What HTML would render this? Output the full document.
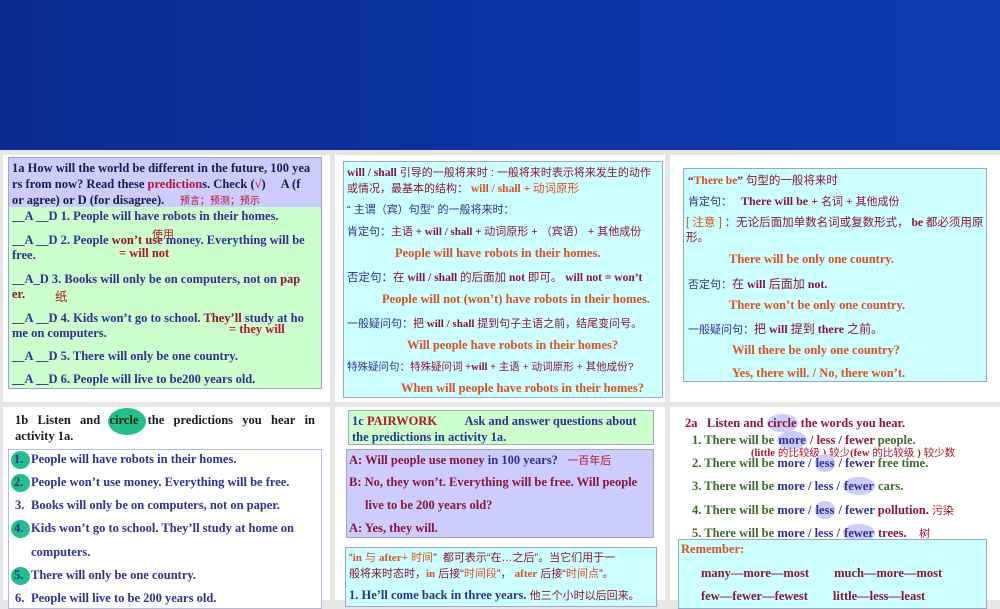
<!DOCTYPE html>
<html><head><meta charset="utf-8"><style>
*{margin:0;padding:0;box-sizing:border-box}
body{width:1000px;height:600px;overflow:hidden;background:#e6e6e6;position:relative;font-family:"Liberation Serif","Noto Serif CJK SC","Noto Sans CJK SC",serif;font-weight:bold;font-size:12.5px}
.ab{position:absolute;white-space:nowrap}
.p{position:absolute;background:#fff}
.b{color:#2e3192}.r{color:#b5142b}.o{color:#e0501e}.dr{color:#8b1538}.g{color:#3a6b2a}.cn{font-family:"Liberation Sans","Noto Sans CJK SC",sans-serif;font-weight:normal}
.box{position:absolute;border:1px solid #9aa6c8}
.el{background:#ccccff;border-radius:50%;padding:2px 1px}
.dot{position:absolute;left:11px;width:19px;height:18px;border-radius:50%;background:#20c08a}
</style></head><body>
<div style="position:absolute;left:0;top:0;width:1000px;height:150px;background:linear-gradient(90deg,#0a2a8e,#0c35a8 60%,#0d3aae)"></div>
<div class="p" style="left:3px;top:155px;width:327px;height:247px"></div>
<div class="p" style="left:335px;top:155px;width:330px;height:247px"></div>
<div class="p" style="left:670px;top:155px;width:330px;height:247px"></div>
<div class="p" style="left:3px;top:407px;width:327px;height:193px"></div>
<div class="p" style="left:335px;top:407px;width:330px;height:193px"></div>
<div class="p" style="left:670px;top:407px;width:330px;height:193px"></div>

<!-- 1a -->
<div class="box" style="left:8px;top:157px;width:314px;height:232px;background:#ccffcc"></div>
<div style="position:absolute;left:9px;top:158px;width:312px;height:49px;background:#ccccff"></div>
<div class="ab" style="left:12px;top:160px;line-height:16px;color:#1a1a4a">1a How will the world be different in the future, 100 yea<br>rs from now? Read these <span class="r">prediction</span>s. Check (<span class="r">√</span>) &nbsp;&nbsp;&nbsp; A (f<br>or agree) or D (for disagree). &nbsp;&nbsp;&nbsp; <span class="r cn" style="font-size:10px">预言；预测；预示</span></div>
<div class="ab b" style="left:12px;top:209px">__A __D 1. People will have robots in their homes.</div>
<div class="ab r cn" style="left:152px;top:226px;font-size:11px">使用</div>
<div class="ab b" style="left:12px;top:233px">__A __D 2. People <span class="dr">won’t use</span> money. Everything will be</div>
<div class="ab b" style="left:12px;top:248px">free.</div><div class="ab r" style="left:119px;top:246px">= will not</div>
<div class="ab b" style="left:12px;top:272px">__A_D 3. Books will only be on computers, not on <span class="dr">pap</span></div>
<div class="ab dr" style="left:12px;top:287px">er.</div><div class="ab r cn" style="left:55px;top:286px">纸</div>
<div class="ab b" style="left:12px;top:311px">__A __D 4. Kids won’t go to school. <span class="dr">They’ll</span> study at ho</div>
<div class="ab b" style="left:12px;top:326px">me on computers.</div><div class="ab r" style="left:229px;top:322px">= they will</div>
<div class="ab b" style="left:12px;top:349px">__A __D 5. There will only be one country.</div>
<div class="ab b" style="left:12px;top:372px">__A __D 6. People will live to be200 years old.</div>

<!-- will/shall -->
<div class="box" style="left:343px;top:161px;width:320px;height:237px;background:#ccffff"></div>
<div class="ab dr" style="left:347px;top:165px;line-height:16px;font-size:11.5px">will / shall <span class="cn" style="font-size:11px">引导的一般将来时 : 一般将来时表示将来发生的动作</span><br><span class="cn" style="font-size:11px">或情况，最基本的结构：</span> <span class="o">will / shall + <span class="cn">动词原形</span></span></div>
<div class="ab b cn" style="left:347px;top:201px;font-size:11px">“ 主谓（宾）句型” 的一般将来时：</div>
<div class="ab dr" style="left:347px;top:223px;font-size:11px"><span class="b cn">肯定句：</span><span class="cn">主语</span> + will / shall + <span class="cn">动词原形 + （宾语） + 其他成份</span></div>
<div class="ab o" style="left:395px;top:246px">People will have robots in their homes.</div>
<div class="ab dr" style="left:347px;top:269px;font-size:11.5px"><span class="b cn">否定句：</span><span class="cn">在</span> will / shall <span class="cn">的后面加</span> not <span class="cn">即可。</span> will not = won’t</div>
<div class="ab o" style="left:382px;top:292px">People will not (won’t) have robots in their homes.</div>
<div class="ab dr" style="left:347px;top:315px;font-size:11px"><span class="b cn">一般疑问句：</span><span class="cn">把</span> will / shall <span class="cn">提到句子主语之前，结尾变问号。</span></div>
<div class="ab o" style="left:407px;top:338px">Will people have robots in their homes?</div>
<div class="ab dr" style="left:347px;top:359px;font-size:10.5px"><span class="b cn">特殊疑问句：</span><span class="cn">特殊疑问词</span> +will + <span class="cn">主语 + 动词原形 + 其他成份?</span></div>
<div class="ab o" style="left:401px;top:381px">When will people have robots in their homes?</div>

<!-- there be -->
<div class="box" style="left:683px;top:168px;width:304px;height:214px;background:#ccffff"></div>
<div class="ab dr" style="left:688px;top:172px;font-size:11.5px">“<span class="o">There be</span>” <span class="cn">句型的一般将来时</span></div>
<div class="ab dr" style="left:688px;top:193px;font-size:12px"><span class="b cn" style="font-size:11px">肯定句：</span> &nbsp;&nbsp;There will be + <span class="cn" style="font-size:11px">名词 + 其他成份</span></div>
<div class="ab dr" style="left:686px;top:216px;line-height:15px;font-size:11.5px"><span class="o cn">[ 注意 ]</span> <span class="cn">：无论后面加单数名词或复数形式，</span> be <span class="cn">都必须用原</span><br><span class="cn">形。</span></div>
<div class="ab o" style="left:729px;top:252px">There will be only one country.</div>
<div class="ab dr" style="left:688px;top:275px;font-size:12px"><span class="b cn" style="font-size:11px">否定句：</span><span class="cn">在</span> will <span class="cn">后面加</span> not.</div>
<div class="ab o" style="left:729px;top:298px">There won’t be only one country.</div>
<div class="ab dr" style="left:688px;top:320px;font-size:12px"><span class="b cn" style="font-size:11px">一般疑问句：</span><span class="cn">把</span> will <span class="cn">提到</span> there <span class="cn">之前。</span></div>
<div class="ab o" style="left:732px;top:343px">Will there be only one country?</div>
<div class="ab o" style="left:732px;top:366px">Yes, there will. / No, there won’t.</div>

<!-- 1b -->
<div style="position:absolute;left:108px;top:408px;width:38px;height:27px;border-radius:50%;background:#20c08a"></div>
<div class="ab" style="left:15px;top:413px;width:300px;color:#1a1a1a;display:flex;justify-content:space-between"><span>1b</span><span>Listen</span><span>and</span><span>circle</span><span>the</span><span>predictions</span><span>you</span><span>hear</span><span>in</span></div>
<div class="ab" style="left:15px;top:429px;color:#1a1a1a">activity 1a.</div>
<div class="box" style="left:8px;top:449px;width:314px;height:160px;background:#fff;border-color:#b8b8e0"></div>
<div class="dot" style="top:451px"></div>
<div class="dot" style="top:474px"></div>
<div class="dot" style="top:520px"></div>
<div class="dot" style="top:567px"></div>
<div class="ab b" style="left:14px;top:452px">1.</div><div class="ab b" style="left:31px;top:452px">People will have robots in their homes.</div>
<div class="ab b" style="left:14px;top:475px">2.</div><div class="ab b" style="left:31px;top:475px">People won’t use money. Everything will be free.</div>
<div class="ab b" style="left:15px;top:498px">3.</div><div class="ab b" style="left:31px;top:498px">Books will only be on computers, not on paper.</div>
<div class="ab b" style="left:14px;top:521px">4.</div><div class="ab b" style="left:31px;top:521px">Kids won’t go to school. They’ll study at home on</div>
<div class="ab b" style="left:31px;top:545px">computers.</div>
<div class="ab b" style="left:14px;top:568px">5.</div><div class="ab b" style="left:31px;top:568px">There will only be one country.</div>
<div class="ab b" style="left:15px;top:591px">6.</div><div class="ab b" style="left:31px;top:591px">People will live to be 200 years old.</div>

<!-- 1c -->
<div class="box" style="left:348px;top:410px;width:306px;height:35px;background:#ccffcc"></div>
<div class="ab b" style="left:352px;top:413px;line-height:16px">1c <span class="r">PAIRWORK</span> &nbsp;&nbsp;&nbsp;&nbsp;&nbsp;&nbsp;&nbsp; Ask and answer questions about<br>the predictions in activity 1a.</div>
<div class="box" style="left:346px;top:449px;width:308px;height:89px;background:#ccccff"></div>
<div class="ab dr" style="left:349px;top:452px">A: Will people use money <span class="b">in 100 years?</span> &nbsp; <span class="r cn" style="font-size:11px">一百年后</span></div>
<div class="ab dr" style="left:349px;top:475px">B: No, they won’t. Everything will be free. Will people</div>
<div class="ab dr" style="left:365px;top:498px">live to be 200 years old?</div>
<div class="ab dr" style="left:349px;top:521px">A: Yes, they will.</div>
<div class="box" style="left:345px;top:547px;width:312px;height:60px;background:#ccffff"></div>
<div class="ab dr cn" style="left:349px;top:550px;line-height:16px;font-size:11px">“<b class="o" style="font-family:'Liberation Serif'">in</b> <span class="o">与</span> <b class="o" style="font-family:'Liberation Serif'">after</b><span class="o">+ 时间</span>” &nbsp;都可表示“在…之后”。当它们用于一<br>般将来时态时，<b class="o" style="font-family:'Liberation Serif'">in</b> 后接“<span class="o">时间段</span>”， <b class="o" style="font-family:'Liberation Serif'">after</b> 后接“<span class="o">时间点</span>”。</div>
<div class="ab b" style="left:349px;top:587px">1. He’ll come back in three years. <span class="dr cn" style="font-size:11px">他三个小时以后回来。</span></div>

<!-- 2a -->
<div class="ab dr" style="left:685px;top:416px">2a &nbsp; Listen and <span class="el">circle</span> the words you hear.</div>
<div class="ab g" style="left:692px;top:433px">1. There will be <span class="b el">more</span> <span class="dr">/ less / fewer</span> people.</div>
<div class="ab r cn" style="left:751px;top:445px;font-size:10.5px"><b style="font-family:'Liberation Serif'">(little</b> 的比较级 <b style="font-family:'Liberation Serif'">)</b> 较少<b style="font-family:'Liberation Serif'">(few</b> 的比较级 <b style="font-family:'Liberation Serif'">)</b> 较少数</div>
<div class="ab g" style="left:692px;top:456px">2. There will be <span class="b">more / <span class="el">less</span> / fewer</span> free time.</div>
<div class="ab g" style="left:692px;top:479px">3. There will be <span class="b">more / less / <span class="el">fewer</span></span> cars.</div>
<div class="ab g" style="left:692px;top:502px">4. There will be <span class="b">more / <span class="el">less</span> / fewer</span> <span class="dr">pollution.</span> <span class="r cn" style="font-size:11px">污染</span></div>
<div class="ab g" style="left:692px;top:525px">5. There will be <span class="b">more / less / <span class="el">fewer</span></span> <span class="dr">trees.</span> &nbsp;&nbsp;&nbsp;<span class="r cn" style="font-size:11px">树</span></div>
<div class="box" style="left:678px;top:539px;width:309px;height:70px;background:#ccffff"></div>
<div class="ab o" style="left:681px;top:542px">Remember:</div>
<div class="ab dr" style="left:701px;top:566px">many—more—most &nbsp;&nbsp;&nbsp;&nbsp;&nbsp;&nbsp; much—more—most</div>
<div class="ab dr" style="left:701px;top:589px">few—fewer—fewest &nbsp;&nbsp;&nbsp;&nbsp;&nbsp;&nbsp; little—less—least</div>
</body></html>
